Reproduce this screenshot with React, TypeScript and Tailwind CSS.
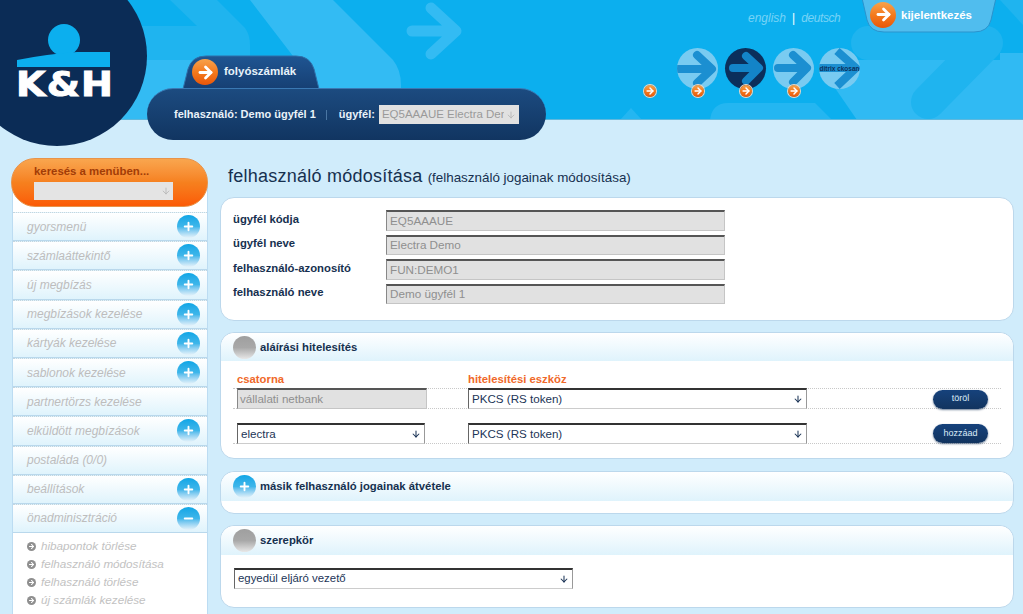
import { ArrowDown, ArrowRight, Minus, Plus } from "lucide-react";

const arial = "font-['Liberation_Sans',Arial,sans-serif]";

const menu = [
  { label: "gyorsmenü", icon: "plus" },
  { label: "számlaáttekintő", icon: "plus" },
  { label: "új megbízás", icon: "plus" },
  { label: "megbízások kezelése", icon: "plus" },
  { label: "kártyák kezelése", icon: "plus" },
  { label: "sablonok kezelése", icon: "plus" },
  { label: "partnertörzs kezelése", icon: "" },
  { label: "elküldött megbízások", icon: "plus" },
  { label: "postaláda (0/0)", icon: "" },
  { label: "beállítások", icon: "plus" },
  { label: "önadminisztráció", icon: "minus" },
];

const subMenu = [
  "hibapontok törlése",
  "felhasználó módosítása",
  "felhasználó törlése",
  "új számlák kezelése",
  "kártyák kezelése",
];

const userFields = [
  { label: "ügyfél kódja", value: "EQ5AAAUE" },
  { label: "ügyfél neve", value: "Electra Demo" },
  { label: "felhasználó-azonosító", value: "FUN:DEMO1" },
  { label: "felhasználó neve", value: "Demo ügyfél 1" },
];

// Blue ball with plus / minus, or plain grey ball when inactive
const Ball = ({ kind }: { kind: "plus" | "minus" | "grey" }) => {
  if (kind === "grey") {
    return <div className="h-[23px] w-[23px] shrink-0 rounded-full bg-gradient-to-b from-[#9f9f9f] via-[#a8a8a8] to-[#e8e8e8]" />;
  }
  return (
    <div className="flex h-[23px] w-[23px] shrink-0 items-center justify-center rounded-full bg-gradient-to-b from-[#0ba6e6] via-[#3db6ea] to-[#e6f3fa]">
      {kind === "plus" ? (
        <Plus size={13} strokeWidth={3.5} className="text-white" />
      ) : (
        <Minus size={13} strokeWidth={3.5} className="text-white" />
      )}
    </div>
  );
};

const OrangeArrow = ({ big }: { big?: boolean }) => (
  <div className={`flex shrink-0 items-center justify-center rounded-full bg-gradient-to-b from-[#f7a24a] via-[#f47a1c] to-[#e8560a] ${big ? "h-[26px] w-[26px]" : "h-[12px] w-[12px] ring-1 ring-[#e9d8c8]"}`}>
    <ArrowRight size={big ? 19 : 10} strokeWidth={3.5} className="text-white" />
  </div>
);

const NavCircle = ({ dark, text, path, className = "" }: { dark?: boolean; text?: string; path: string; className?: string }) => (
  <div className={`relative flex h-[41px] w-[41px] shrink-0 items-center justify-center overflow-hidden rounded-full ${dark ? "bg-[#0b2f5b]" : "bg-[#79cbf1]"} ${className}`}>
    <svg viewBox="0 0 41 41" className="absolute inset-0 h-full w-full">
      <path d={path} fill="none" stroke={dark ? "#1384c8" : "#1b8fd1"} strokeWidth="8" strokeLinejoin="round" strokeLinecap={text ? "butt" : "round"} />
    </svg>
    {text && <span className={`${arial} relative text-[6.5px] font-bold whitespace-nowrap text-[#0b2f5b]`}>{text}</span>}
  </div>
);

const GreyInput = ({ value, className }: { value: string; className: string }) => (
  <div className={`flex items-center border-t-2 border-r border-b border-l border-t-[#555] border-r-[#c5c5c5] border-b-[#c5c5c5] border-l-[#888] bg-[#e1e1e1] pl-[2px] text-[#8f8f8f] ${className}`}>
    {value}
  </div>
);

const SelectBox = ({ value, className }: { value: string; className: string }) => (
  <div className={`flex items-center justify-between border-t-2 border-r border-b border-l border-t-[#333] border-r-[#999] border-b-[#ccc] border-l-[#666] bg-white px-[3px] text-[#1c3557] ${className}`}>
    <span>{value}</span>
    <ArrowDown size={10} strokeWidth={2.5} className="text-[#1c3557]" />
  </div>
);

const DarkButton = ({ label }: { label: string }) => (
  <button className="h-[19px] w-[55px] rounded-full bg-gradient-to-b from-[#16427c] to-[#12345f] text-[9px] text-[#dcecf7] shadow-[0_1px_2px_rgba(10,40,80,.6)]">
    {label}
  </button>
);

const Card = ({ children, className = "" }: { children: React.ReactNode; className?: string }) => (
  <section className={`rounded-[14px] border border-[#bcd8ec] bg-white ${className}`}>{children}</section>
);

const CardHead = ({ title, ball, height }: { title: string; ball: "plus" | "grey"; height: string }) => (
  <div className={`flex items-center gap-[4px] rounded-t-[14px] bg-gradient-to-b from-white to-[#dff3fc] pl-[12px] ${height}`}>
    <Ball kind={ball} />
    <h2 className="text-[11.3px] font-bold text-[#16304f]">{title}</h2>
  </div>
);

const Header = () => (
  <header className="relative h-[120px] shrink-0 overflow-hidden bg-[#0cafee]">
    {/* background arrow shapes */}
    <svg viewBox="0 0 1023 120" className="absolute inset-0 h-full w-full">
      <path d="M170 0H217L245 28Q250 35 250 45V60H120V26H197Z" fill="#1fb4ef" />
      <path d="M120 60H260V120H120Z" fill="#33bbf3" />
      <path d="M250 0H333L393 60Q401 70 401 85V120H250V60H296Z" fill="#33bbf3" />
      <path d="M412 31H448M431 8L456 31L431 54" fill="none" stroke="#33bbf3" strokeWidth="11" strokeLinecap="round" strokeLinejoin="round" />
      <path d="M835 88L850 60H1000V53H1023V120H857Z" fill="#30baf3" />
      <path d="M868 43H986L928 102" fill="none" stroke="#1fb4ef" strokeWidth="34" strokeLinecap="round" strokeLinejoin="round" />
      <path d="M1000 0H1023V25Z" fill="#1fb4ef" />
      <path d="M710 120Q712 103 728 103H815L832 120Z" fill="#24b6f1" />
      <path d="M620 120L631 108L642 120Z" fill="#24b6f1" />
    </svg>
    <div className="absolute bottom-0 h-px w-full bg-[#5fb8dd]" />

    {/* language + logout */}
    <div className={`${arial} absolute top-[9px] left-[748px] flex items-center gap-[6px] text-[12px] italic text-[#77d3f6]`}>
      <span>english</span>
      <span className="text-white not-italic">|</span>
      <span className="tracking-[-.4px]">deutsch</span>
    </div>
    <div className="absolute top-0 left-[862px] flex h-[33px] w-[134px] items-center gap-[5px] pl-[8px]">
      <svg viewBox="0 0 134 33" className="absolute inset-0 h-full w-full">
        <path d="M0 -2L5 20Q8 32 22 32H112Q126 32 129 20L134 -2Z" fill="#50bdee" stroke="#2a93cd" />
      </svg>
      <div className="relative -mt-[4px]"><OrangeArrow big /></div>
      <span className={`${arial} relative -mt-[2px] text-[11.5px] font-bold text-white`}>kijelentkezés</span>
    </div>

    {/* shortcut circles */}
    <div className="absolute top-[48px] left-[677px] flex gap-[7px]">
      <NavCircle path="M-2 21H33M20 7L35 21L20 35" />
      <NavCircle dark path="M8 20H33M21 8L34 20L21 33" />
      <NavCircle path="M5 20H33M20 7L34 20L20 34" />
      <NavCircle className="-ml-[2px]" text="ditrix ckosan" path="M0 20H35M18 3L37 20L18 38" />
    </div>
    <div className="absolute top-[85px] left-[644px] flex gap-[36px]">
      <OrangeArrow />
      <OrangeArrow />
      <OrangeArrow />
      <OrangeArrow />
    </div>

    {/* tab */}
    <div className="absolute top-[55px] left-[182px] flex h-[34px] w-[138px] items-center gap-[6px] pl-[10px]">
      <svg viewBox="0 0 138 34" className="absolute inset-0 h-full w-full">
        <defs>
          <linearGradient id="tabFill" x1="0" y1="0" x2="0" y2="1">
            <stop offset="0" stopColor="#1f5592" />
            <stop offset="1" stopColor="#163f73" />
          </linearGradient>
        </defs>
        <path d="M1 34L6 14Q10 1 24 1H114Q128 1 132 14L137 34Z" fill="url(#tabFill)" stroke="#2f6fa8" />
      </svg>
      <div className="relative"><OrangeArrow big /></div>
      <span className={`${arial} relative text-[11.5px] font-bold text-[#e8f3fa]`}>folyószámlák</span>
    </div>
  </header>
);

const UserBar = () => (
  <div className={`${arial} absolute top-[88px] left-[147px] flex h-[52px] w-[399px] items-center rounded-[26px] border-t border-[#3a78b3] bg-gradient-to-b from-[#1c4b80] to-[#113561] pl-[27px] text-[11px] font-bold text-[#e9f2f9]`}>
    <span>felhasználó: Demo ügyfél 1</span>
    <span className="mr-[12px] ml-[10px] h-[10px] w-px bg-[#4a76a3]" />
    <span>ügyfél:</span>
    <div className="ml-[4px] flex h-[19px] w-[140px] items-center justify-between bg-[#e1e1e1] px-[3px] text-[11.5px] font-normal text-[#9a9a9a]">
      <span className="w-[122px] overflow-hidden whitespace-nowrap">EQ5AAAUE Electra Demo</span>
      <ArrowDown size={10} strokeWidth={2} className="text-[#b5b5b5]" />
    </div>
  </div>
);

const Logo = () => (
  <div className="absolute top-[-34px] left-[-33px] h-[180px] w-[180px] rounded-full bg-[#0b2c56]">
    <svg viewBox="0 0 180 180" className="absolute inset-0 h-full w-full">
      <circle cx="97" cy="74" r="16" fill="#0cafee" />
      <path d="M50 94Q80 88 110 86H143V101H50Z" fill="#0cafee" />
    </svg>
    <span className="absolute top-[98px] left-[49px] origin-left scale-x-[1.12] font-['DejaVu_Sans',sans-serif] text-[34px] leading-[40px] font-bold tracking-[1px] text-white [-webkit-text-stroke:1px_white]">
      K&amp;H
    </span>
  </div>
);

const Sidebar = () => (
  <aside className="flex w-[196px] shrink-0 flex-col">
    <div className={`${arial} relative z-10 -ml-[1px] h-[49px] w-[197px] shrink-0 rounded-[24px] border border-[#e8934a] bg-gradient-to-b from-[#f9a64e] via-[#f6801e] to-[#fb5a05] pt-[4px] pl-[22px]`}>
      <div className="text-[11.4px] font-bold text-[#a23c07]">keresés a menüben...</div>
      <div className="mt-[2px] flex h-[18px] w-[139px] items-center justify-end bg-[#e4e4e4] pr-[2px]">
        <ArrowDown size={10} strokeWidth={2} className="text-[#b5b5b5]" />
      </div>
    </div>
    <nav className={`${arial} -mt-[24px] min-h-0 flex-1 border-x border-[#bcdcf2] bg-white pt-[29px]`}>
      {menu.map((item) => (
        <div key={item.label} className="flex h-[29.2px] items-center justify-between border-t border-dotted border-[#c5d5de] bg-gradient-to-b from-white to-[#def3fc] pr-[7px] pb-[1px] pl-[14px] shadow-[inset_0_-1px_0_#b9d8ec]">
          <span className="text-[12px] italic text-[#bdbdbd]">{item.label}</span>
          {item.icon && <Ball kind={item.icon as "plus" | "minus"} />}
        </div>
      ))}
      <ul className="pt-[4px] pl-[14px]">
        {subMenu.map((label) => (
          <li key={label} className="flex h-[18px] items-center gap-[5px] text-[11.7px] italic text-[#c2c2c2]">
            <span className="flex h-[9px] w-[9px] items-center justify-center rounded-full bg-[#8f8f8f]">
              <ArrowRight size={7} strokeWidth={3.5} className="text-white" />
            </span>
            {label}
          </li>
        ))}
      </ul>
    </nav>
  </aside>
);

const Content = () => (
  <main className={`${arial} flex min-w-0 flex-1 flex-col`}>
    <div className="flex h-[39px] items-baseline pt-[6px] pl-[8px] text-[#16304f]">
      <h1 className="text-[18px] leading-[24px] tracking-[.25px]">felhasználó módosítása</h1>
      <span className="ml-[5px] text-[13.4px]">(felhasználó jogainak módosítása)</span>
    </div>

    <Card className="h-[124px] pt-[12px] pl-[12px]">
      <div className="flex flex-col gap-[4px]">
        {userFields.map((f) => (
          <div key={f.label} className="flex h-[20.5px] items-center">
            <label className="w-[153px] pb-[2px] text-[11.3px] font-bold text-[#16304f]">{f.label}</label>
            <GreyInput value={f.value} className="h-[20.5px] w-[339px] pl-[3px] text-[11.7px]" />
          </div>
        ))}
      </div>
    </Card>

    <Card className="mt-[11px] h-[127px]">
      <CardHead title="aláírási hitelesítés" ball="grey" height="h-[28px]" />
      <div className="px-[12px] pt-[10px] text-[11.6px]">
        <div className="flex h-[17px] gap-[47px] text-[11.3px] font-bold text-[#f0692a]">
          <div className="w-[188px] pl-[4px]">csatorna</div>
          <div>hitelesítési eszköz</div>
        </div>
        <div className="flex h-[21px] items-center border-y border-dotted border-[#c8c8c8] pl-[4px]">
          <GreyInput value="vállalati netbank" className="h-[21px] w-[190px]" />
          <SelectBox value="PKCS (RS token)" className="ml-[41px] h-[21px] w-[339px]" />
          <div className="ml-auto pr-[13px]"><DarkButton label="töröl" /></div>
        </div>
        <div className="mt-[14px] flex h-[21px] items-center border-b border-dotted border-[#c8c8c8] pl-[4px]">
          <SelectBox value="electra" className="h-[21px] w-[188px]" />
          <SelectBox value="PKCS (RS token)" className="ml-[43px] h-[21px] w-[339px]" />
          <div className="ml-auto pr-[13px]"><DarkButton label="hozzáad" /></div>
        </div>
      </div>
    </Card>

    <Card className="mt-[12px] h-[43px]">
      <CardHead title="másik felhasználó jogainak átvétele" ball="plus" height="h-[29px]" />
    </Card>

    <Card className="mt-[11px] h-[83px]">
      <CardHead title="szerepkör" ball="grey" height="h-[29px]" />
      <div className="pt-[13px] pl-[13px]">
        <SelectBox value="egyedül eljáró vezető" className="h-[21px] w-[339px] text-[11.4px]" />
      </div>
    </Card>
  </main>
);

export default function App() {
  return (
    <div className={`${arial} relative flex h-[614px] w-[1023px] flex-col overflow-hidden bg-[#d0ecfb]`}>
      <Header />
      <UserBar />
      <Logo />
      <div className="flex min-h-0 flex-1 gap-[12px] pt-[38px] pr-[9px] pl-[12px]">
        <Sidebar />
        <Content />
      </div>
    </div>
  );
}
